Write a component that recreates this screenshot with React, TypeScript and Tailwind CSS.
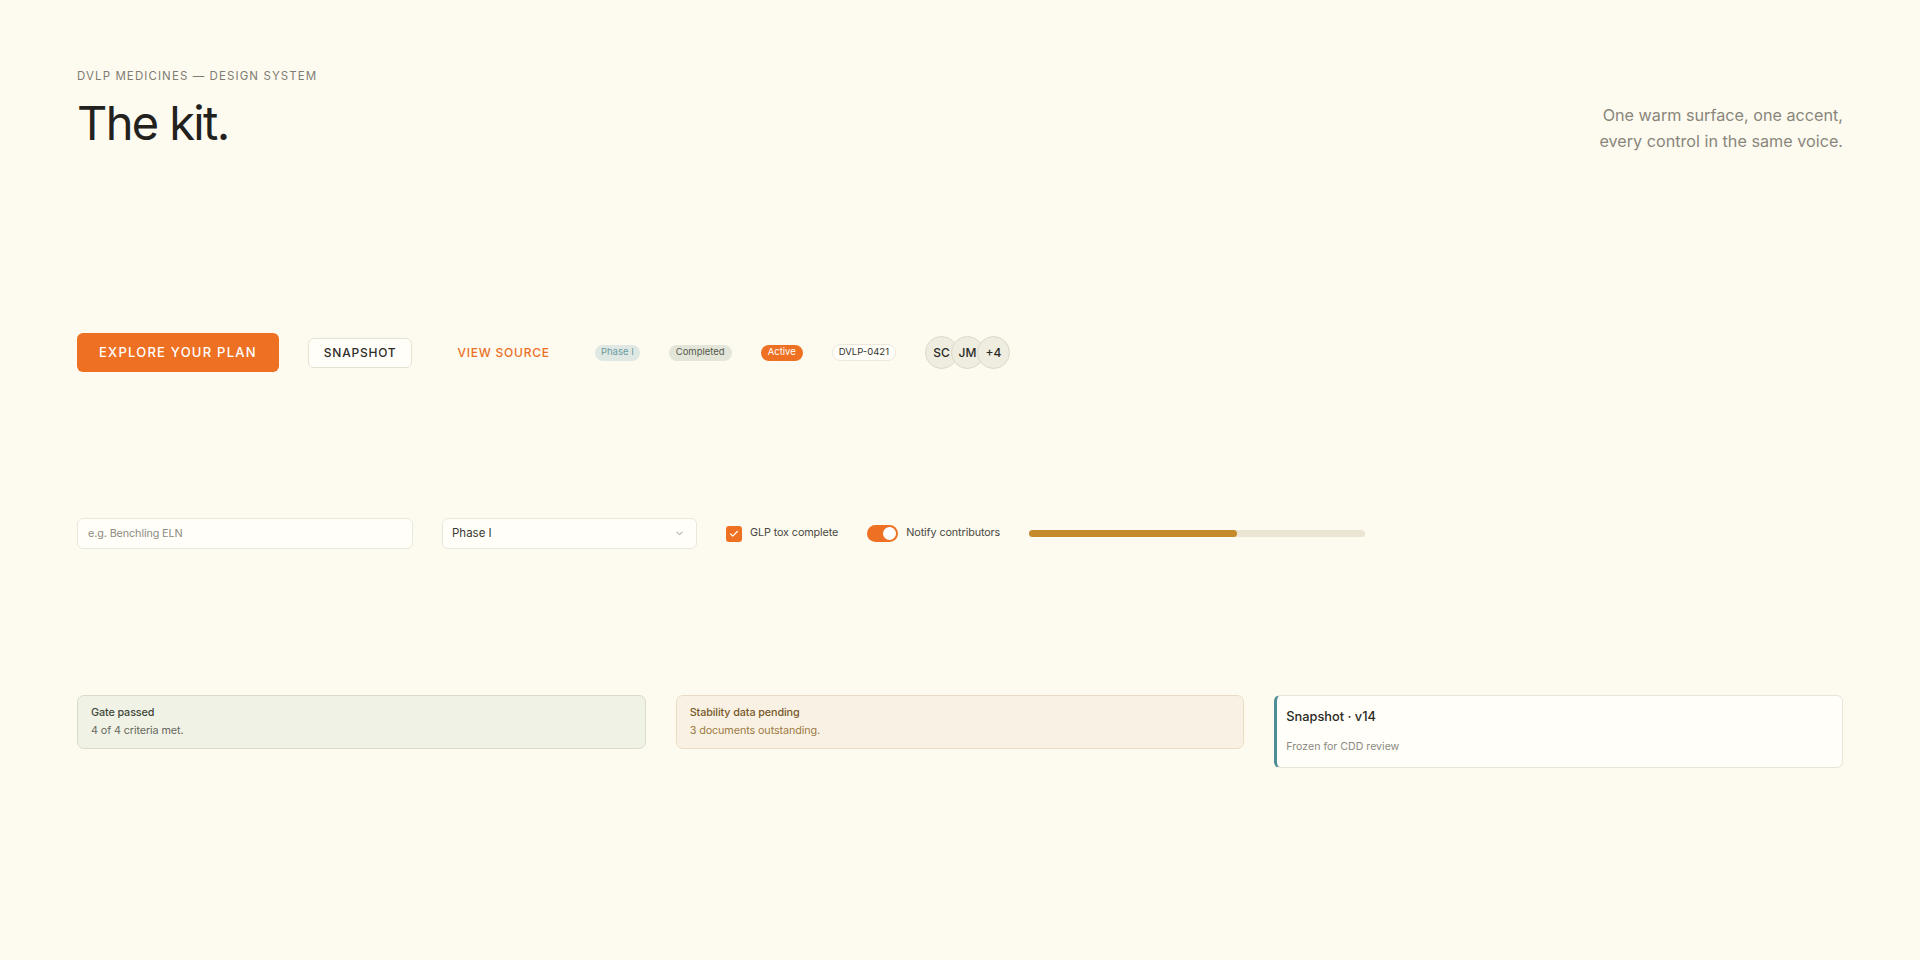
import React from 'react'
import { Check, ChevronDown } from 'lucide-react'

const avatars = ['SC', 'JM', '+4']

export default function App() {
  return (
    <div className="min-h-screen bg-[#fdfbf0] px-[77px] pt-[68px] font-['Inter',sans-serif] text-[#24231f]">
      {/* header */}
      <div className="flex items-start justify-between">
        <div>
          <p className="text-[11.5px] leading-4 tracking-[0.095em] text-[#7f7c72]">DVLP MEDICINES — DESIGN SYSTEM</p>
          <h1 className="mt-[14px] text-[47px] leading-[50px] tracking-[-0.035em] text-[#22211d]">The kit.</h1>
        </div>
        <p className="mt-[34px] text-right text-[16.2px] leading-[26px] text-[#89867b]">
          One warm surface, one accent,
          <br />
          every control in the same voice.
        </p>
      </div>

      {/* buttons + badges */}
      <div className="mt-[179px] flex items-center gap-[29px]">
        <button className="h-[39px] rounded-[6px] bg-[#ee7023] px-[22px] text-[13px] font-medium tracking-[0.095em] text-white">
          EXPLORE YOUR PLAN
        </button>
        <button className="h-[30px] rounded-[6px] border border-[#e6e2d3] bg-[#fffef8] px-[15px] text-[12px] font-medium tracking-[0.065em] text-[#2e2d28]">
          SNAPSHOT
        </button>
        <button className="h-[30px] px-[16px] text-[12px] font-medium tracking-[0.065em] text-[#ec6f25]">
          VIEW SOURCE
        </button>
        <span className="flex h-[16px] items-center rounded-full bg-[#dfe8e3] px-[6px] text-[9.5px] text-[#6c9ba0]">Phase I</span>
        <span className="flex h-[16px] items-center rounded-full bg-[#e4e5d9] px-[7px] text-[9.5px] text-[#545a4c]">Completed</span>
        <span className="flex h-[16px] items-center rounded-full bg-[#ee7023] px-[7px] text-[9.5px] text-white">Active</span>
        <span className="flex h-[17px] items-center rounded-full border border-[#ebe7da] bg-[#fffef9] px-[6px] text-[9.5px] text-[#35342e]">DVLP-0421</span>
        <div className="flex">
          {avatars.map((a, i) => (
            <div
              key={a}
              className={`flex h-[33px] w-[33px] items-center justify-center rounded-full border border-[#dcd8ca] bg-[#efece0] text-[12px] font-medium text-[#2a2a25] ${i > 0 ? '-ml-[7px]' : ''}`}
            >
              {a}
            </div>
          ))}
        </div>
      </div>

      {/* form controls */}
      <div className="mt-[146px] flex items-center gap-[29px]">
        <input
          placeholder="e.g. Benchling ELN"
          className="h-[31px] w-[336px] rounded-[6px] border border-[#ebe7da] bg-[#fffef9] px-[10px] text-[10.8px] tracking-[-0.01em] text-[#3a3a33] outline-none placeholder:text-[#8e8b81]"
        />
        <div className="flex h-[31px] w-[255px] items-center justify-between rounded-[6px] border border-[#ebe7da] bg-[#fffef9] pl-[9px] pr-[11px]">
          <span className="text-[11.5px] text-[#3a3a33]">Phase I</span>
          <ChevronDown size={11} className="text-[#8e8b81]" />
        </div>
        <label className="flex items-center gap-[8px]">
          <span className="flex h-[16px] w-[16px] items-center justify-center rounded-[3px] bg-[#ee7023]">
            <Check size={10} strokeWidth={3} className="text-white" />
          </span>
          <span className="text-[10.8px] tracking-[-0.01em] text-[#4a4842]">GLP tox complete</span>
        </label>
        <label className="flex items-center gap-[8px]">
          <span className="flex h-[17px] w-[31px] items-center justify-end rounded-full bg-[#ee7023] px-[2px]">
            <span className="h-[13px] w-[13px] rounded-full bg-white" />
          </span>
          <span className="text-[10.8px] tracking-[-0.01em] text-[#4a4842]">Notify contributors</span>
        </label>
        <div className="h-[7px] w-[336px] rounded-full bg-[#ebe5d4]">
          <div className="h-full rounded-full bg-[#c58a2b]" style={{ width: '62%' }} />
        </div>
      </div>

      {/* cards */}
      <div className="mt-[146px] grid grid-cols-3 items-start gap-[30px]">
        <div className="rounded-[7px] border border-[#d9dccb] bg-[#f1f2e6] px-[13px] py-[9px]">
          <p className="text-[10.8px] font-medium leading-4 tracking-[-0.01em] text-[#3f473a]">Gate passed</p>
          <p className="mt-[2px] text-[10.8px] leading-4 tracking-[-0.01em] text-[#66695d]">4 of 4 criteria met.</p>
        </div>
        <div className="rounded-[7px] border border-[#e9dcc3] bg-[#f9f2e4] px-[13px] py-[9px]">
          <p className="text-[10.8px] font-medium leading-4 tracking-[-0.01em] text-[#78582a]">Stability data pending</p>
          <p className="mt-[2px] text-[10.8px] leading-4 tracking-[-0.01em] text-[#9d7a44]">3 documents outstanding.</p>
        </div>
        <div className="rounded-[6px] border border-[#e7e4d8] border-l-[3px] border-l-[#4e8e98] bg-[#fffef8] pb-[13px] pl-[9px] pt-[11px]">
          <p className="text-[12.8px] font-medium leading-5 text-[#2a2a25]">Snapshot · v14</p>
          <p className="mt-[12px] text-[10.6px] leading-[15px] text-[#8c8a82]">Frozen for CDD review</p>
        </div>
      </div>
    </div>
  )
}
